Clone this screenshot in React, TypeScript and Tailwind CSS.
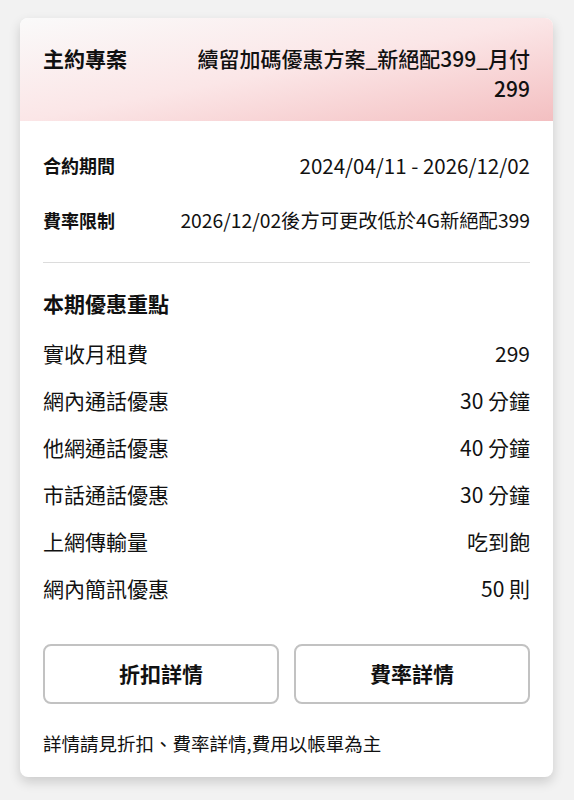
import React from 'react';

const PERKS: { label: string; value: string }[] = [
  { label: '實收月租費', value: '299' },
  { label: '網內通話優惠', value: '30 分鐘' },
  { label: '他網通話優惠', value: '40 分鐘' },
  { label: '市話通話優惠', value: '30 分鐘' },
  { label: '上網傳輸量', value: '吃到飽' },
  { label: '網內簡訊優惠', value: '50 則' },
];

export default function App() {
  return (
    <div
      className="min-h-screen bg-[#f2f2f2] pt-[18px] px-[20px] text-[#111]"
      style={{ fontFamily: '"Noto Sans CJK TC", "Noto Sans", sans-serif' }}
    >
      <div className="w-[533px] h-[759px] bg-white rounded-lg shadow-[0_5px_12px_rgba(0,0,0,0.16)] overflow-hidden">
        {/* header */}
        <div className="h-[103px] flex justify-between px-[23px] pt-[25px] bg-gradient-to-br from-[#fafafa] via-[#fbe6e7] to-[#f3bfc1]">
          <span className="text-[21px] leading-[30px] font-bold">主約專案</span>
          <span className="w-[345px] text-right text-[21px] leading-[30px] font-medium">
            續留加碼優惠方案_新絕配399_月付299
          </span>
        </div>

        <div className="px-[23px]">
          <div className="flex justify-between items-center h-[55px] mt-[17px]">
            <span className="text-[18px] font-bold">合約期間</span>
            <span className="text-[20.5px]">2024/04/11 - 2026/12/02</span>
          </div>
          <div className="flex justify-between items-center h-[55px]">
            <span className="text-[18px] font-bold">費率限制</span>
            <span className="text-[19.3px]">2026/12/02後方可更改低於4G新絕配399</span>
          </div>
          <div className="h-px bg-[#dcdcdc] mt-[14px]" />

          <div className="text-[21px] font-bold leading-[30px] mt-[25px]">本期優惠重點</div>

          <div className="mt-[12px] flex flex-col">
            {PERKS.map((p) => (
              <div key={p.label} className="flex justify-between items-center h-[47px] text-[21px]">
                <span>{p.label}</span>
                <span>{p.value}</span>
              </div>
            ))}
          </div>

          <div className="grid grid-cols-2 gap-[15px] mt-[32px]">
            <button className="h-[60px] rounded-lg border-2 border-[#c2c2c2] bg-white text-[21px] font-bold">
              折扣詳情
            </button>
            <button className="h-[60px] rounded-lg border-2 border-[#c2c2c2] bg-white text-[21px] font-bold">
              費率詳情
            </button>
          </div>

          <p className="text-[18.5px] mt-[26px]">詳情請見折扣、費率詳情,費用以帳單為主</p>
        </div>
      </div>
    </div>
  );
}
